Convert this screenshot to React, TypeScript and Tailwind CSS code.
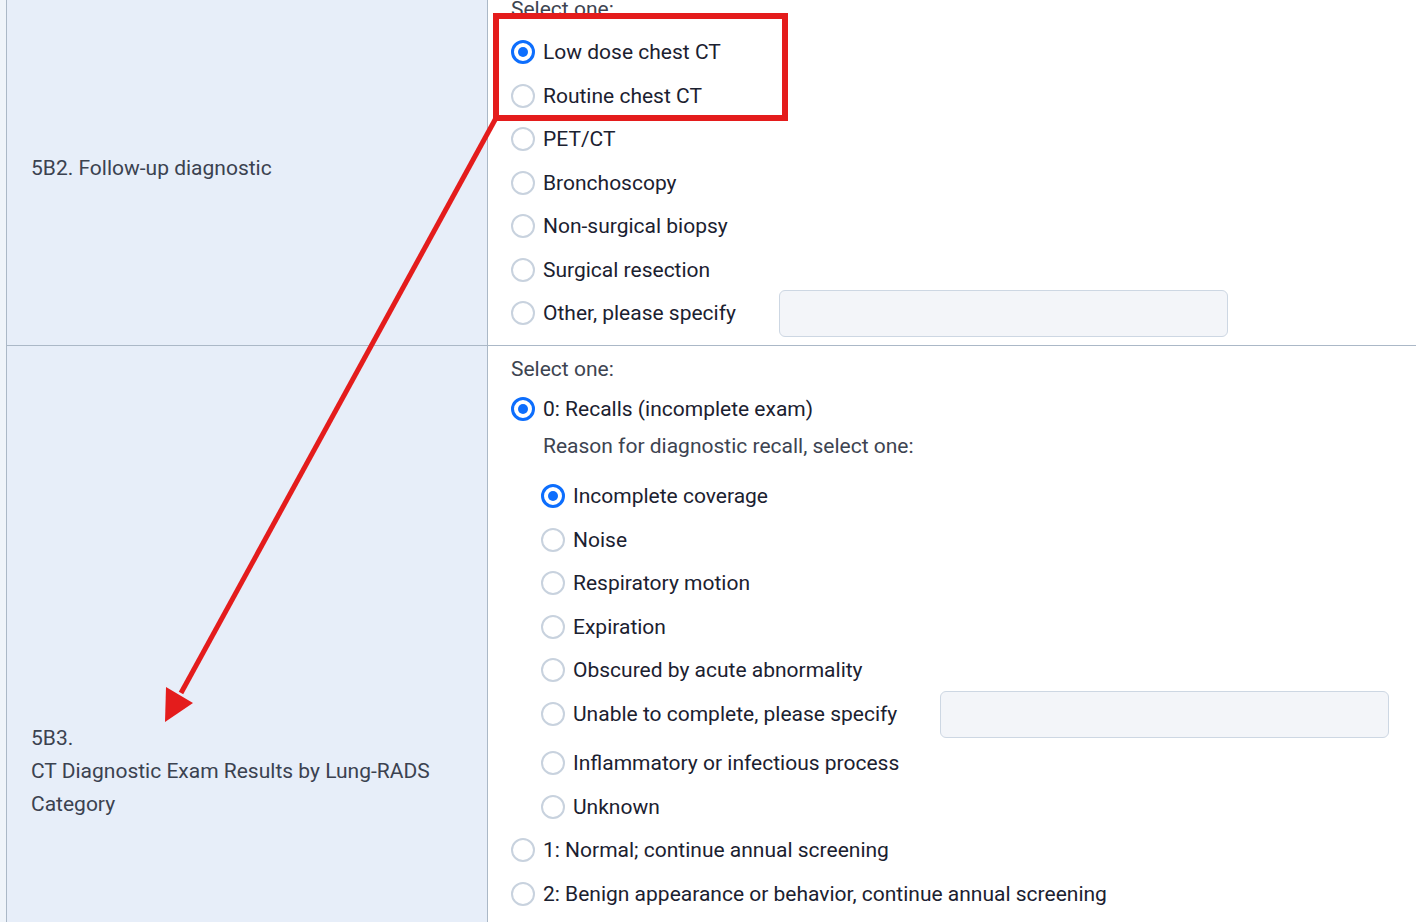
import React from "react";

function Radio({ checked }: { checked?: boolean }) {
  if (checked) {
    return (
      <span className="w-6 h-6 rounded-full border-[3px] border-[#0d6efd] bg-white flex items-center justify-center shrink-0">
        <span className="w-[10px] h-[10px] rounded-full bg-[#0d6efd]" />
      </span>
    );
  }
  return <span className="w-6 h-6 rounded-full border-2 border-[#c8d2de] bg-white shrink-0" />;
}

function Option({
  label,
  checked,
  withInput,
  className = "h-[43.5px]",
}: {
  label: string;
  checked?: boolean;
  withInput?: boolean;
  className?: string;
}) {
  return (
    <div className={`flex items-center gap-2 text-[#1b2130] ${className}`}>
      <Radio checked={checked} />
      <span className="leading-[28px] whitespace-nowrap">{label}</span>
      {withInput && (
        <input
          type="text"
          readOnly
          className="ml-[35px] w-[449px] h-[47px] shrink-0 rounded-[6px] border border-[#cdd7e3] bg-[#f3f5f9] outline-none"
        />
      )}
    </div>
  );
}

export default function App() {
  return (
    <div className="relative w-[1416px] h-[922px] overflow-hidden bg-[#eff4fa] font-['Roboto',sans-serif] text-[21px]">
      <div className="ml-[6px] -mt-[13.5px] border-l border-[#abb8c7] bg-white">
        {/* Row 5B2 */}
        <div className="flex border-b border-[#abb8c7]">
          <div className="w-[481px] shrink-0 bg-[#e7eef9] border-r border-[#abb8c7] flex items-center pl-[24px] pr-[20px] pt-[5px] text-[#3b4250] leading-[33px]">
            5B2. Follow-up diagnostic
          </div>
          <div className="flex-1 pl-[23px] pt-[8px] pb-[10.25px]">
            <div className="leading-[28px] text-[#3d4451] mb-[7.75px]">Select one:</div>
            <Option label="Low dose chest CT" checked />
            <Option label="Routine chest CT" />
            <Option label="PET/CT" />
            <Option label="Bronchoscopy" />
            <Option label="Non-surgical biopsy" />
            <Option label="Surgical resection" />
            <Option label="Other, please specify" withInput />
          </div>
        </div>

        {/* Row 5B3 */}
        <div className="flex">
          <div className="w-[481px] shrink-0 bg-[#e7eef9] border-r border-[#abb8c7] flex flex-col justify-center pl-[24px] pr-[20px] text-[#3b4250] leading-[33px]">
            <div>5B3.</div>
            <div>CT Diagnostic Exam Results by Lung-RADS Category</div>
          </div>
          <div className="flex-1 pl-[23px] pt-[9px] pb-[21px]">
            <div className="leading-[28px] text-[#3d4451] mb-[4.25px]">Select one:</div>
            <Option label="0: Recalls (incomplete exam)" checked />
            <div className="h-[43.5px] pt-[1.25px] pl-[32px] leading-[28px] text-[#3d4451]">
              Reason for diagnostic recall, select one:
            </div>
            <div className="pl-[30px]">
              <Option label="Incomplete coverage" checked />
              <Option label="Noise" />
              <Option label="Respiratory motion" />
              <Option label="Expiration" />
              <Option label="Obscured by acute abnormality" />
              <Option label="Unable to complete, please specify" withInput className="h-[49.5px] pb-[5px]" />
              <Option label="Inflammatory or infectious process" />
              <Option label="Unknown" />
            </div>
            <Option label="1: Normal; continue annual screening" />
            <Option label="2: Benign appearance or behavior, continue annual screening" />
            <Option label="3: Probably benign, short-term follow-up suggested" />
            <Option label="4A: Suspicious, additional diagnostic testing warranted" />
            <Option label="4B: Very suspicious, additional diagnostic testing warranted" />
            <Option label="4X: Category 3 or 4 nodules with additional features" />
            <Option label="S: Other clinically significant findings" />
            <Option label="Unknown" />
          </div>
        </div>
      </div>

      <svg
        className="absolute left-0 top-0 pointer-events-none"
        width="1416"
        height="922"
        viewBox="0 0 1416 922"
      >
        <rect x="496" y="16" width="289" height="102" fill="none" stroke="#e41c1c" strokeWidth="6" />
        <line x1="496" y1="118" x2="181" y2="693" stroke="#e41c1c" strokeWidth="5" />
        <polygon points="165,722 166,687 193,703" fill="#e41c1c" />
      </svg>
    </div>
  );
}
